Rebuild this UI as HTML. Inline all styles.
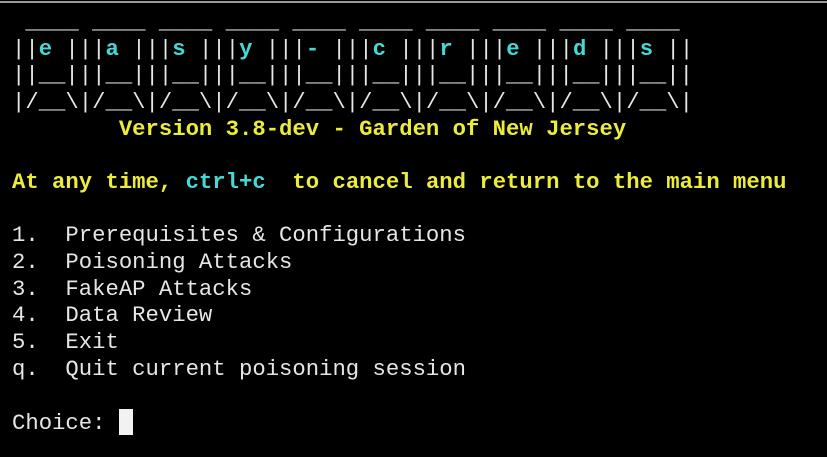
<!DOCTYPE html>
<html><head><meta charset="utf-8"><style>
html,body{margin:0;padding:0;background:#000;width:827px;height:457px;overflow:hidden}
.top{position:absolute;left:0;top:1px;width:827px;height:2px;background:#9a9a9a}
pre{position:absolute;left:12px;top:9px;margin:0;font-family:"Liberation Mono",monospace;font-size:22.25px;line-height:26.65px;color:#e6e6e6;font-weight:normal}
.c{color:#45d9d6;font-weight:bold}.y{color:#ecec3a;font-weight:bold}
.cur{display:inline-block;width:14px;height:26px;background:#f2f2f2;vertical-align:-6px}
</style></head><body><div class="top"></div>
<pre> ____ ____ ____ ____ ____ ____ ____ ____ ____ ____
||<span class="c">e</span> |||<span class="c">a</span> |||<span class="c">s</span> |||<span class="c">y</span> |||<span class="c">-</span> |||<span class="c">c</span> |||<span class="c">r</span> |||<span class="c">e</span> |||<span class="c">d</span> |||<span class="c">s</span> ||
||__|||__|||__|||__|||__|||__|||__|||__|||__|||__||
|/__\|/__\|/__\|/__\|/__\|/__\|/__\|/__\|/__\|/__\|
<span class="y">        Version 3.8-dev - Garden of New Jersey</span>

<span class="y">At any time, <span class="c">ctrl+c</span>  to cancel and return to the main menu</span>

1.  Prerequisites &amp; Configurations
2.  Poisoning Attacks
3.  FakeAP Attacks
4.  Data Review
5.  Exit
q.  Quit current poisoning session

Choice: <span class="cur"></span></pre>
</body></html>
